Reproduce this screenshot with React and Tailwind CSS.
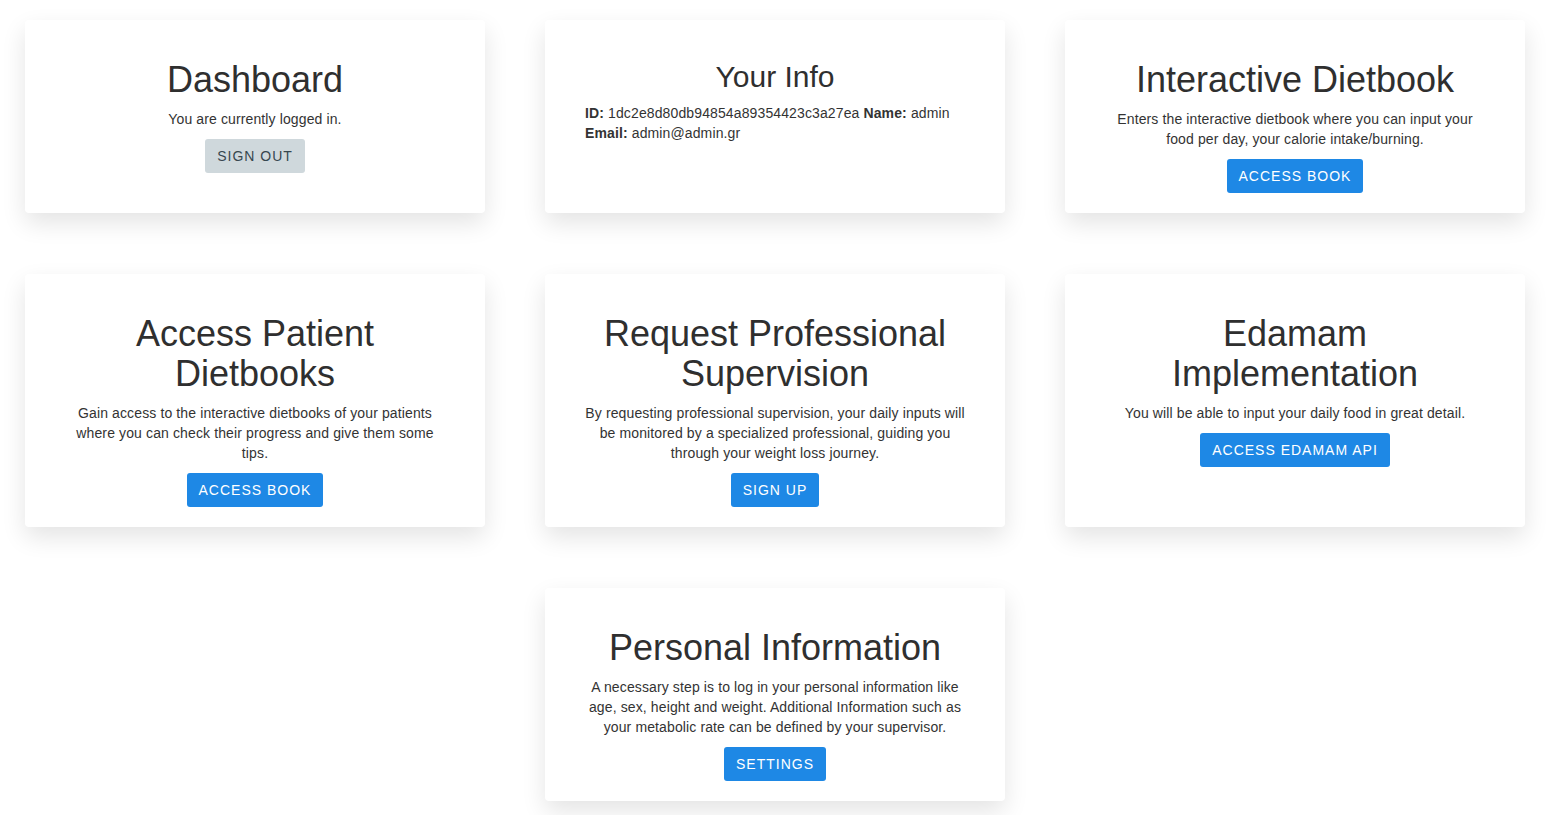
import React from "react";

const font = { fontFamily: '"Liberation Sans", Arial, sans-serif' };

/* ================= CARD ================= */
function Card({ title, text, button, grey, className = "" }) {
  return (
    <div className={`rounded bg-white px-10 pt-10 pb-5 text-center shadow-[0_10px_24px_rgba(0,0,0,0.11)] ${className}`}>
      <h2 className="text-[36px] leading-[40px] text-[#2f2f2f]">{title}</h2>
      <p className="mt-[9px] text-[14px] leading-5 tracking-[0.12px] text-[#333]">{text}</p>
      <button
        className={`mt-[10px] h-[34px] rounded-[3px] px-3 text-[14px] tracking-[1px] uppercase ${
          grey ? "bg-[#cfd8dc] text-[#37474f]" : "bg-[#1e88e5] text-white"
        }`}
      >
        {button}
      </button>
    </div>
  );
}

export default function App() {
  return (
    <div style={font} className="min-h-screen bg-white">
      <div className="ml-[25px] grid w-[1500px] grid-cols-[460px_460px_460px] gap-x-[60px] gap-y-[61px] pt-5 pb-4">

        <Card title="Dashboard" text="You are currently logged in." button="Sign out" grey />

        {/* YOUR INFO */}
        <div className="rounded bg-white px-10 pt-10 pb-5 shadow-[0_10px_24px_rgba(0,0,0,0.11)]">
          <h3 className="text-center text-[30px] leading-[33px] text-[#2f2f2f]">Your Info</h3>
          <p className="mt-[10px] text-[14px] leading-5 tracking-[0.12px] text-[#333]">
            <b>ID:</b> 1dc2e8d80db94854a89354423c3a27ea <b>Name:</b> admin <b>Email:</b> admin@admin.gr
          </p>
        </div>

        <Card
          title="Interactive Dietbook"
          text="Enters the interactive dietbook where you can input your food per day, your calorie intake/burning."
          button="Access book"
        />

        <Card
          title="Access Patient Dietbooks"
          text="Gain access to the interactive dietbooks of your patients where you can check their progress and give them some tips."
          button="Access book"
        />

        <Card
          title="Request Professional Supervision"
          text="By requesting professional supervision, your daily inputs will be monitored by a specialized professional, guiding you through your weight loss journey."
          button="Sign up"
        />

        <Card
          title="Edamam Implementation"
          text="You will be able to input your daily food in great detail."
          button="Access Edamam API"
        />

        <Card
          className="col-start-2"
          title="Personal Information"
          text="A necessary step is to log in your personal information like age, sex, height and weight. Additional Information such as your metabolic rate can be defined by your supervisor."
          button="Settings"
        />

      </div>
    </div>
  );
}
